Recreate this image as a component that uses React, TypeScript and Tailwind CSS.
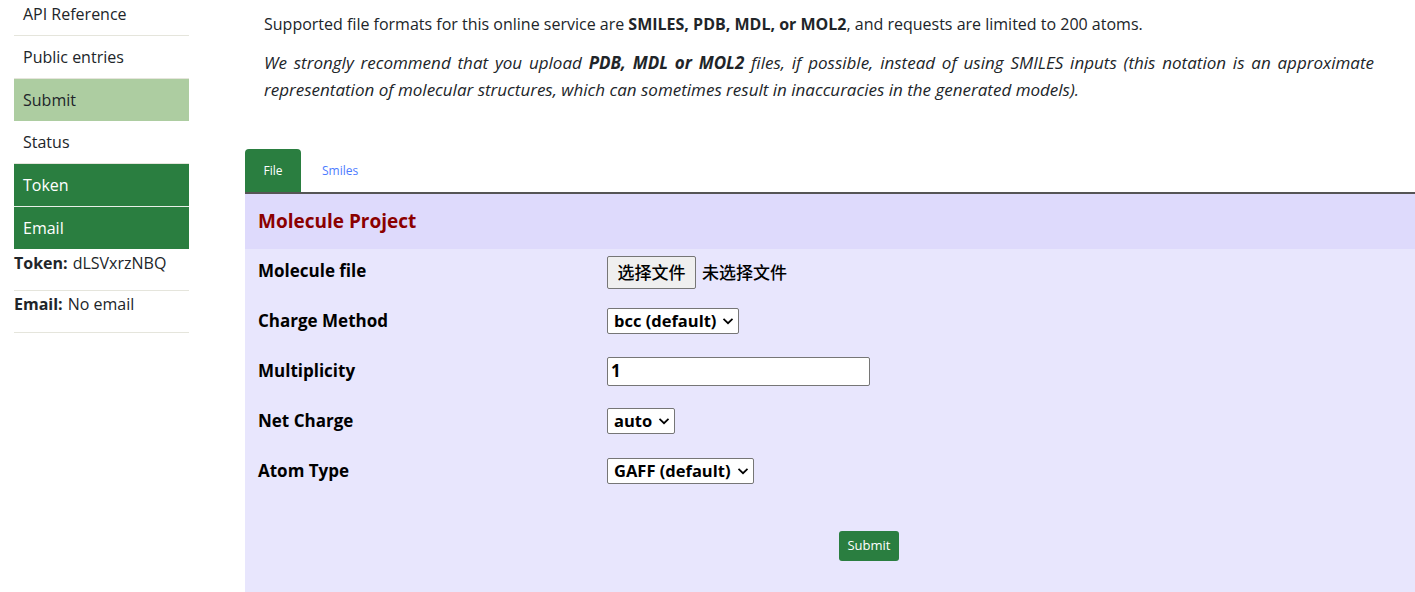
import React from "react";

const F = { fontFamily: '"Open Sans", "Noto Sans CJK SC", sans-serif' };

function Chevron() {
  return (
    <svg width="12" height="8" viewBox="0 0 12 8" className="ml-[6px]">
      <path d="M1.5 1.8 L6 6.2 L10.5 1.8" stroke="#000" strokeWidth="1.7" fill="none" />
    </svg>
  );
}

function Select({ label }: { label: string }) {
  return (
    <div className="inline-flex h-[26px] items-center rounded-[2px] border border-[#767676] bg-white pl-[6px] pr-[4px] text-[16.5px] font-bold text-black">
      <span className="leading-none">{label}</span>
      <Chevron />
    </div>
  );
}

export default function App() {
  const rows: { label: string; control: React.ReactNode }[] = [
    {
      label: "Molecule file",
      control: (
        <div className="mt-[3px] flex items-center">
          <div className="flex h-[33px] w-[89px] items-center justify-center rounded-[2px] border border-[#767676] bg-[#efefef] text-[17px] font-medium text-black">
            选择文件
          </div>
          <span className="ml-[6px] text-[17px] font-medium text-black">未选择文件</span>
        </div>
      ),
    },
    { label: "Charge Method", control: <Select label="bcc (default)" /> },
    {
      label: "Multiplicity",
      control: (
        <div className="flex h-[29px] w-[263px] items-center rounded-[2px] border border-[#767676] bg-white pl-[3px] text-[17px] font-bold text-black">
          1
        </div>
      ),
    },
    { label: "Net Charge", control: <Select label="auto" /> },
    { label: "Atom Type", control: <Select label="GAFF (default)" /> },
  ];

  return (
    <div className="flex h-[592px] w-[1415px] overflow-hidden bg-white text-[#212529]" style={F}>
      {/* Sidebar */}
      <div className="ml-[14px] w-[175px] shrink-0 text-[16px]">
        <div className="-mt-[7px] flex h-[43px] items-center border-b border-[#e5e5dc] pl-[9px]">API Reference</div>
        <div className="flex h-[43px] items-center border-b border-[#e5e5dc] pl-[9px]">Public entries</div>
        <div className="flex h-[42px] items-center bg-[#adcda1] pl-[9px]">Submit</div>
        <div className="flex h-[43px] items-center border-b border-[#e5e5dc] pl-[9px]">Status</div>
        <div className="flex h-[43px] items-center border-b border-[#e8f0e8] bg-[#2a7e40] pl-[9px] text-white">Token</div>
        <div className="flex h-[42px] items-center bg-[#2a7e40] pl-[9px] text-white">Email</div>
        <div className="h-[42px] border-b border-[#e5e5dc] pt-[2px] leading-[24px]">
          <b className="mr-[5px]">Token:</b>dLSVxrzNBQ
        </div>
        <div className="h-[42px] border-b border-[#e5e5dc] pt-[1px] leading-[24px]">
          <b className="mr-[5px]">Email:</b>No email
        </div>
      </div>

      {/* Main */}
      <div className="ml-[56px] flex min-w-0 flex-1 flex-col">
        <div className="pl-[19px] pr-[41px] text-[16px] text-[#212529]">
          <p className="mt-[11px] leading-[26px]">
            Supported file formats for this online service are <b>SMILES, PDB, MDL, or MOL2</b>, and requests are limited to 200 atoms.
          </p>
          <p className="mt-[12px] text-justify text-[17px] italic leading-[27px]">
            We strongly recommend that you upload <b>PDB, MDL or MOL2</b> files, if possible, instead of using SMILES inputs (this notation is an approximate representation of molecular structures, which can sometimes result in inaccuracies in the generated models).
          </p>
        </div>

        {/* Tabs */}
        <div className="mt-[46px] flex border-b-2 border-[#555]">
          <div className="flex h-[43px] w-[56px] items-center justify-center rounded-t-[4px] bg-[#2a7e40] text-[12px] text-white">File</div>
          <div className="flex h-[43px] items-center pl-[21px] text-[12px] text-[#4d7cff]">Smiles</div>
        </div>

        {/* Panel */}
        <div className="flex flex-1 flex-col bg-[#e8e6fd]">
          <div className="flex h-[55px] items-center bg-[#dedafc] pl-[13px] text-[19px] font-bold text-[#8b0000]">
            Molecule Project
          </div>
          <div className="-mt-[3px] flex flex-col">
            {rows.map((r) => (
              <div key={r.label} className="flex h-[50px] items-center">
                <div className="w-[362px] shrink-0 pl-[13px] text-[17px] font-bold text-black">{r.label}</div>
                <div>{r.control}</div>
              </div>
            ))}
          </div>
          <div className="mt-[35px] pl-[594px]">
            <div className="flex h-[30px] w-[60px] items-center justify-center rounded-[3px] bg-[#2a7e40] text-[13px] text-white">Submit</div>
          </div>
        </div>
      </div>
    </div>
  );
}
